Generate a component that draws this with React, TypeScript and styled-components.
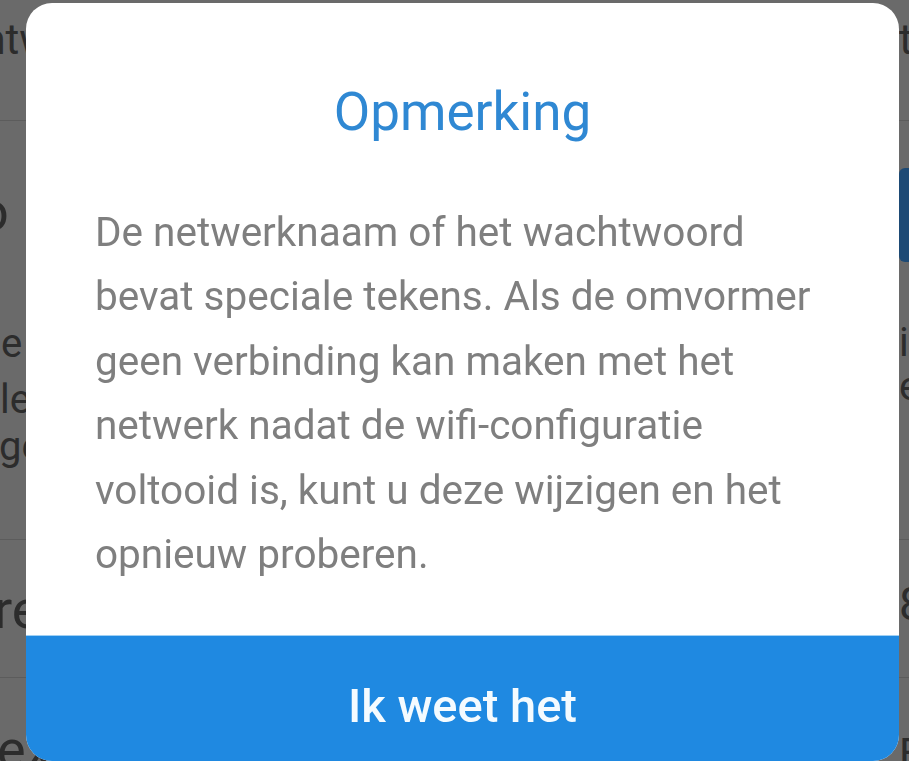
import React from 'react'
import styled, { createGlobalStyle } from 'styled-components'

const GlobalStyle = createGlobalStyle`
  html, body {
    margin: 0;
    padding: 0;
    background: #6a6a6a;
    overflow: hidden;
  }
  body {
    font-family: Roboto, "Noto Sans", "Liberation Sans", sans-serif;
  }
`

// the settings page that sits dimmed behind the dialog
const Page = styled.div`
  width: 909px;
  height: 761px;
  background: #6a6a6a;
  display: flex;
  flex-direction: column;
  overflow: hidden;
`

interface SectionProps {
  h: number
  line?: boolean
}
const Section = styled.div<SectionProps>`
  height: ${p => p.h}px;
  flex-shrink: 0;
  display: flex;
  justify-content: space-between;
  border-bottom: ${p => (p.line ? '1px solid #5c5c5c' : 'none')};
  overflow: hidden;
`

const LeftSide = styled.div`
  display: flex;
  flex-direction: column;
`

const RightSide = styled.div`
  width: 10px;
  flex-shrink: 0;
  display: flex;
  flex-direction: column;
`

interface TextProps {
  shift?: number
  top: number
  size?: number
  lh?: number
}
const BackText = styled.div<TextProps>`
  margin-left: ${p => p.shift || 0}px;
  margin-top: ${p => p.top}px;
  font-size: ${p => p.size || 42}px;
  line-height: ${p => p.lh || 52}px;
  color: #2c2c2c;
  white-space: nowrap;
`

const BackButton = styled.div`
  width: 120px;
  height: 94px;
  margin-top: 47px;
  background: #1d4a75;
  border-radius: 6px 0 0 6px;
`

const Dialog = styled.div`
  position: fixed;
  left: 26px;
  top: 3px;
  width: 873px;
  height: 758px;
  background: #ffffff;
  border-radius: 26px;
  overflow: hidden;
  display: flex;
  flex-direction: column;
`

const Title = styled.h2`
  margin: 0;
  padding-top: 79px;
  font-size: 53px;
  font-weight: 400;
  line-height: 60px;
  color: #2f88d3;
  text-align: center;
`

const Body = styled.p`
  margin: 58px 0 0;
  padding: 0 69px;
  font-size: 40.5px;
  line-height: 64.4px;
  color: #7f7f7f;
`

const ActionButton = styled.button`
  margin-top: auto;
  height: 126px;
  border: none;
  border-top: 1px solid #9fd0f4;
  background: #1f89e1;
  color: #f4fbff;
  font-family: Roboto, "Noto Sans", "Liberation Sans", sans-serif;
  font-size: 47px;
  font-weight: 500;
  line-height: 56px;
  padding: 42px 0 0;
  display: flex;
  justify-content: center;
  align-items: flex-start;
  cursor: pointer;
`

const App = () => {
  return (
    <>
      <GlobalStyle />
      <Page>
        <Section h={120} line>
          <LeftSide>
            <BackText shift={-99} top={14}>Wachtwoord</BackText>
          </LeftSide>
          <RightSide>
            <BackText top={14}>tonen</BackText>
          </RightSide>
        </Section>
        <Section h={418} line>
          <LeftSide>
            <BackText shift={-22} top={61} size={54} lh={60}>o</BackText>
            <BackText shift={1} top={78} size={40} lh={48}>e</BackText>
            <BackText top={8} size={40} lh={48}>le</BackText>
            <BackText shift={-1} top={-1} size={40} lh={48}>ge</BackText>
          </LeftSide>
          <RightSide>
            <BackButton />
            <BackText top={59} size={40} lh={44}>i</BackText>
            <BackText top={0} size={40} lh={44}>e</BackText>
          </RightSide>
        </Section>
        <Section h={137} line>
          <LeftSide>
            <BackText shift={-6} top={40} size={54} lh={60}>re</BackText>
          </LeftSide>
          <RightSide>
            <BackText top={38} size={46}>8</BackText>
          </RightSide>
        </Section>
        <Section h={90}>
          <LeftSide>
            <BackText shift={-3} top={42} size={54} lh={60}>ex</BackText>
          </LeftSide>
          <RightSide>
            <BackText top={50}>E</BackText>
          </RightSide>
        </Section>
      </Page>
      <Dialog role="dialog">
        <Title>Opmerking</Title>
        <Body>
          De netwerknaam of het wachtwoord bevat speciale tekens. Als de omvormer
          geen verbinding kan maken met het netwerk nadat de wifi-configuratie
          voltooid is, kunt u deze wijzigen en het opnieuw proberen.
        </Body>
        <ActionButton>Ik weet het</ActionButton>
      </Dialog>
    </>
  )
}

export default App
